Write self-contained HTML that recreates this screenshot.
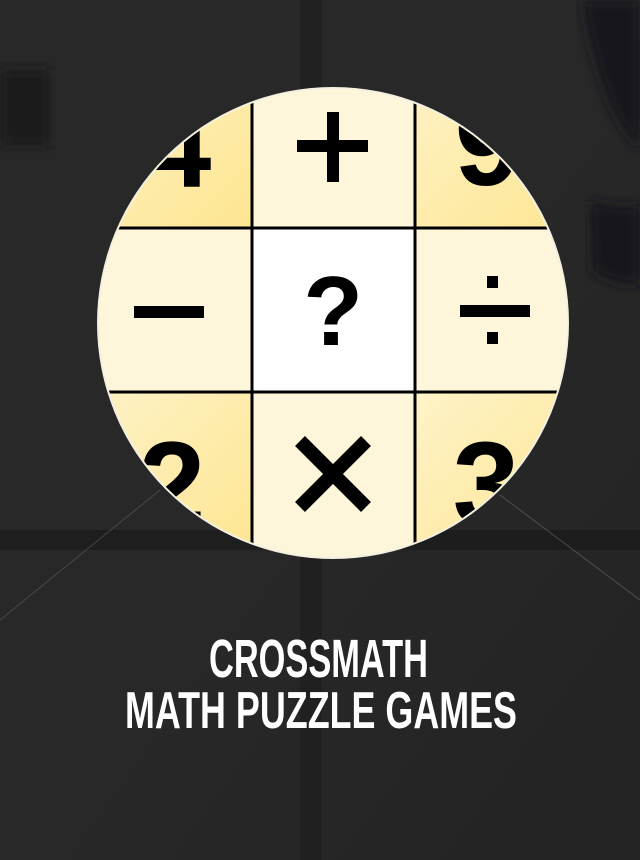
<!DOCTYPE html>
<html><head><meta charset="utf-8"><style>
html,body{margin:0;padding:0;background:#262626;}
svg{display:block}
</style></head><body>
<svg width="640" height="860" viewBox="0 0 640 860" xmlns="http://www.w3.org/2000/svg">
<defs>
<linearGradient id="bg" x1="0" y1="0" x2="1" y2="1">
<stop offset="0" stop-color="#282828"/><stop offset="0.5" stop-color="#292828"/><stop offset="1" stop-color="#232323"/>
</linearGradient>
<linearGradient id="corner" x1="0" y1="0" x2="1" y2="1">
<stop offset="0" stop-color="#fef3c8"/><stop offset="1" stop-color="#fde590"/>
</linearGradient>
<clipPath id="c"><circle cx="333" cy="323" r="234"/></clipPath>
<filter id="bl"><feGaussianBlur stdDeviation="6"/></filter>
</defs>
<rect width="640" height="860" fill="url(#bg)"/>
<rect x="0" y="70" width="50" height="75" fill="#141414" opacity="0.7" filter="url(#bl)"/>
<rect x="300" y="0" width="22" height="860" fill="#1d1d1d" opacity="0.6"/>
<rect x="0" y="530" width="640" height="20" fill="#1a1a1a" opacity="0.7"/>
<path d="M582 0 Q600 110 640 150 L640 0Z" fill="#12141a" filter="url(#bl)"/>
<path d="M590 200 Q620 210 640 205 L640 285 Q610 285 592 270Z" fill="#15171c" filter="url(#bl)"/>
<line x1="0" y1="620" x2="160" y2="490" stroke="#6a5a5a" stroke-width="1" opacity="0.6"/>
<line x1="500" y1="495" x2="640" y2="600" stroke="#777" stroke-width="1" opacity="0.5"/>
<circle cx="333" cy="323" r="236" fill="#f4f0e0"/>
<g clip-path="url(#c)">
<rect x="80" y="60" width="172" height="168" fill="url(#corner)"/>
<rect x="415" y="60" width="172" height="168" fill="url(#corner)"/>
<rect x="80" y="392" width="172" height="170" fill="url(#corner)"/>
<rect x="415" y="392" width="172" height="170" fill="url(#corner)"/>
<rect x="252" y="60" width="163" height="168" fill="#fef6da"/>
<rect x="80" y="228" width="172" height="164" fill="#fef6da"/>
<rect x="415" y="228" width="172" height="164" fill="#fef6da"/>
<rect x="252" y="392" width="163" height="170" fill="#fef6da"/>
<rect x="252" y="228" width="163" height="164" fill="#ffffff"/>
<g fill="#000">
<rect x="250.5" y="60" width="3" height="510"/>
<rect x="413.5" y="60" width="3" height="510"/>
<rect x="80" y="226.5" width="510" height="3"/>
<rect x="80" y="390.5" width="510" height="3"/>
<rect x="297" y="140" width="71" height="12"/>
<rect x="327" y="112" width="12" height="70"/>
<rect x="134" y="306" width="70" height="12"/>
<rect x="460" y="305" width="70" height="12"/>
<rect x="487" y="276" width="11" height="12"/>
<rect x="487" y="332" width="11" height="12"/>
<path d="M300 441 L366 507 M366 441 L300 507" stroke="#000" stroke-width="14"/>
</g>
<g font-family="Liberation Sans, sans-serif" font-weight="bold" fill="#000">
<text x="333" y="345" font-size="98" text-anchor="middle">?</text>
<text x="178" y="187" font-size="120" text-anchor="middle">4</text>
<text x="488" y="185" font-size="120" text-anchor="middle">9</text>
<text x="172" y="525" font-size="120" text-anchor="middle">2</text>
<text x="486" y="525" font-size="120" text-anchor="middle">3</text>
</g>
</g>
<g font-family="Liberation Sans, sans-serif" font-weight="bold" fill="#fff">
<text x="209" y="677" font-size="54" textLength="219" lengthAdjust="spacingAndGlyphs">CROSSMATH</text>
<text x="125" y="728" font-size="52" textLength="392" lengthAdjust="spacingAndGlyphs">MATH PUZZLE GAMES</text>
</g>
</svg>
</body></html>
